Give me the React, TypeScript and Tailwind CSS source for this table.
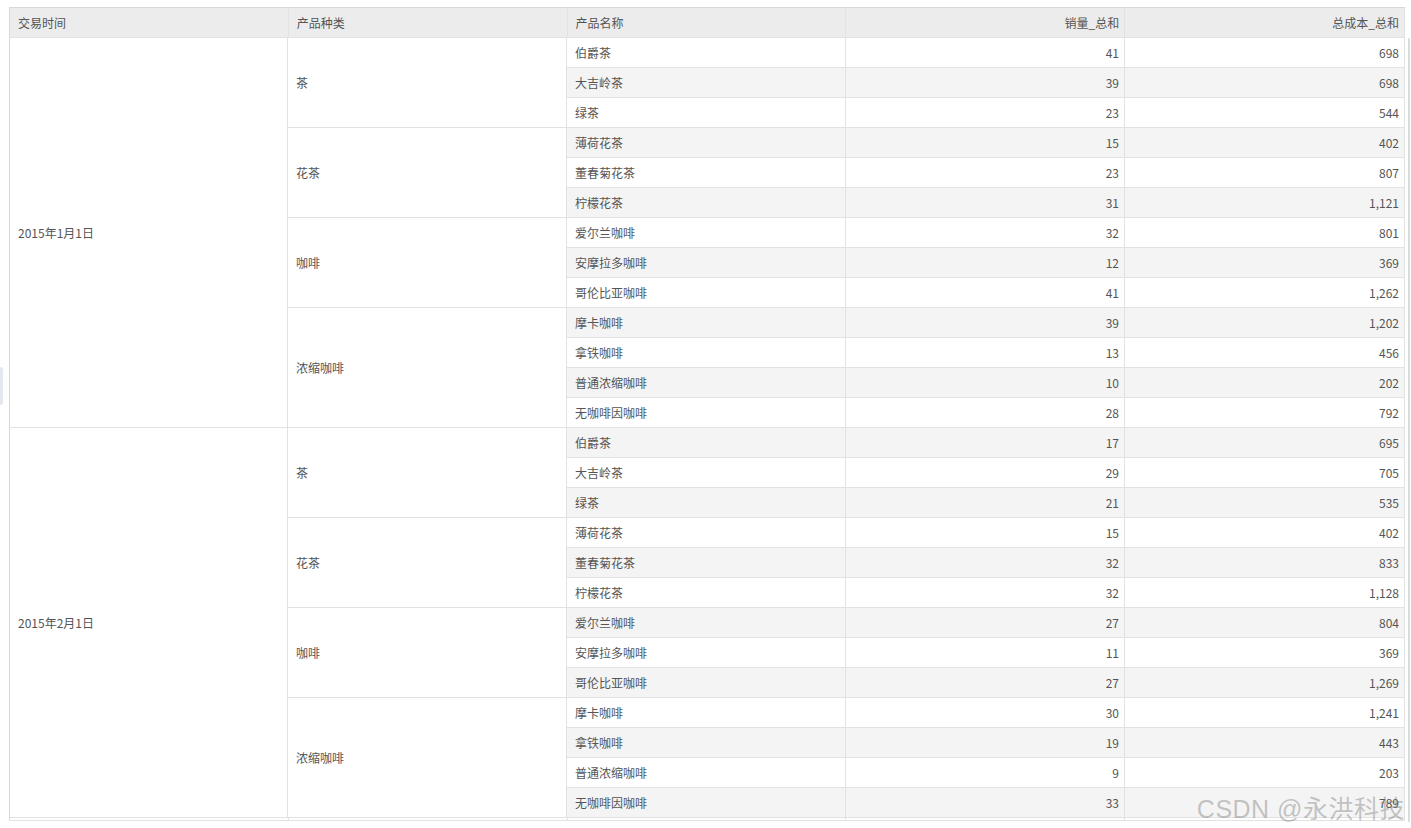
import React from 'react'

type Row = { name: string; qty: number; cost: string }
type Cat = { cat: string; rows: Row[] }
type DateGroup = { date: string; cats: Cat[] }

const mk = (q: number[], c: string[]): Cat[] => {
  const names = [
    ['茶', ['伯爵茶', '大吉岭茶', '绿茶']],
    ['花茶', ['薄荷花茶', '董春菊花茶', '柠檬花茶']],
    ['咖啡', ['爱尔兰咖啡', '安摩拉多咖啡', '哥伦比亚咖啡']],
    ['浓缩咖啡', ['摩卡咖啡', '拿铁咖啡', '普通浓缩咖啡', '无咖啡因咖啡']],
  ] as const
  let i = 0
  return names.map(([cat, list]) => ({
    cat,
    rows: list.map((name) => {
      const r = { name, qty: q[i], cost: c[i] }
      i++
      return r
    }),
  }))
}

const data: DateGroup[] = [
  {
    date: '2015年1月1日',
    cats: mk(
      [41, 39, 23, 15, 23, 31, 32, 12, 41, 39, 13, 10, 28],
      ['698', '698', '544', '402', '807', '1,121', '801', '369', '1,262', '1,202', '456', '202', '792'],
    ),
  },
  {
    date: '2015年2月1日',
    cats: mk(
      [17, 29, 21, 15, 32, 32, 27, 11, 27, 30, 19, 9, 33],
      ['695', '705', '535', '402', '833', '1,128', '804', '369', '1,269', '1,241', '443', '203', '789'],
    ),
  },
]

const cell = 'border-r border-b border-[#e2e2e2] box-border'

export default function App() {
  let idx = 0
  return (
    <div
      className="relative h-[828px] w-[1411px] overflow-hidden bg-white text-[12px] text-[#555]"
      style={{ fontFamily: '"Microsoft YaHei", "Noto Sans CJK SC", "Noto Sans", sans-serif' }}
    >
      {/* left collapse tab */}
      <div className="absolute left-0 top-[367px] h-[38px] w-[3px] rounded-r bg-[#e3e8ee]" />

      <div className="flex pl-[9px] pt-[7px]">
        <div className="h-[814px] w-[1396px] overflow-hidden border-b border-[#e2e2e2]">
          <div className="border-l border-t border-[#d8d8d8]">
            {/* header */}
            <div className="flex h-[30px] bg-[#ececec] text-[#555]">
              <div className={`${cell} flex w-[279px] items-center border-[#d8d8d8] pl-[8px]`}>交易时间</div>
              <div className={`${cell} flex w-[279px] items-center border-[#d8d8d8] pl-[8px]`}>产品种类</div>
              <div className={`${cell} flex w-[279px] items-center border-[#d8d8d8] pl-[8px]`}>产品名称</div>
              <div className={`${cell} flex w-[279px] items-center justify-end border-[#d8d8d8] pr-[5px]`}>销量_总和</div>
              <div className={`${cell} flex w-[280px] items-center justify-end border-[#d8d8d8] pr-[5px]`}>总成本_总和</div>
            </div>

            {data.map((g) => (
              <div key={g.date} className="flex">
                <div className={`${cell} flex w-[279px] items-center pl-[8px]`}>{g.date}</div>
                <div className="flex flex-col">
                  {g.cats.map((c) => (
                    <div key={c.cat} className="flex">
                      <div className={`${cell} flex w-[279px] items-center pl-[8px]`}>{c.cat}</div>
                      <div className="flex flex-col">
                        {c.rows.map((r) => {
                          const striped = idx++ % 2 === 1
                          const bg = striped ? 'bg-[#f4f4f4]' : 'bg-white'
                          return (
                            <div key={r.name} className={`flex h-[30px] ${bg}`}>
                              <div className={`${cell} flex w-[279px] items-center pl-[8px]`}>{r.name}</div>
                              <div className={`${cell} flex w-[279px] items-center justify-end pr-[5px]`}>{r.qty}</div>
                              <div className={`${cell} flex w-[280px] items-center justify-end pr-[5px]`}>{r.cost}</div>
                            </div>
                          )
                        })}
                      </div>
                    </div>
                  ))}
                </div>
              </div>
            ))}

            {/* start of the next, clipped row */}
            <div className="flex h-[10px]">
              <div className="w-[279px] border-r border-[#e2e2e2]" />
              <div className="w-[279px] border-r border-[#e2e2e2]" />
              <div className="w-[279px] border-r border-[#e2e2e2]" />
              <div className="w-[279px] border-r border-[#e2e2e2]" />
              <div className="w-[280px] border-r border-[#e2e2e2]" />
            </div>
          </div>
        </div>

        {/* vertical scrollbar */}
        <div className="ml-[3px] mt-[31px] h-[784px] w-[2px] rounded-t bg-[#dcdcdc]" />
      </div>

      {/* watermark */}
      <div
        className="pointer-events-none absolute bottom-[6px] right-[6px] text-[25px] leading-none tracking-[0.5px] text-[rgba(120,120,120,0.42)]"
        style={{ fontFamily: '"Liberation Sans", "Noto Sans CJK SC", sans-serif' }}
      >
        CSDN @永洪科技
      </div>
    </div>
  )
}
